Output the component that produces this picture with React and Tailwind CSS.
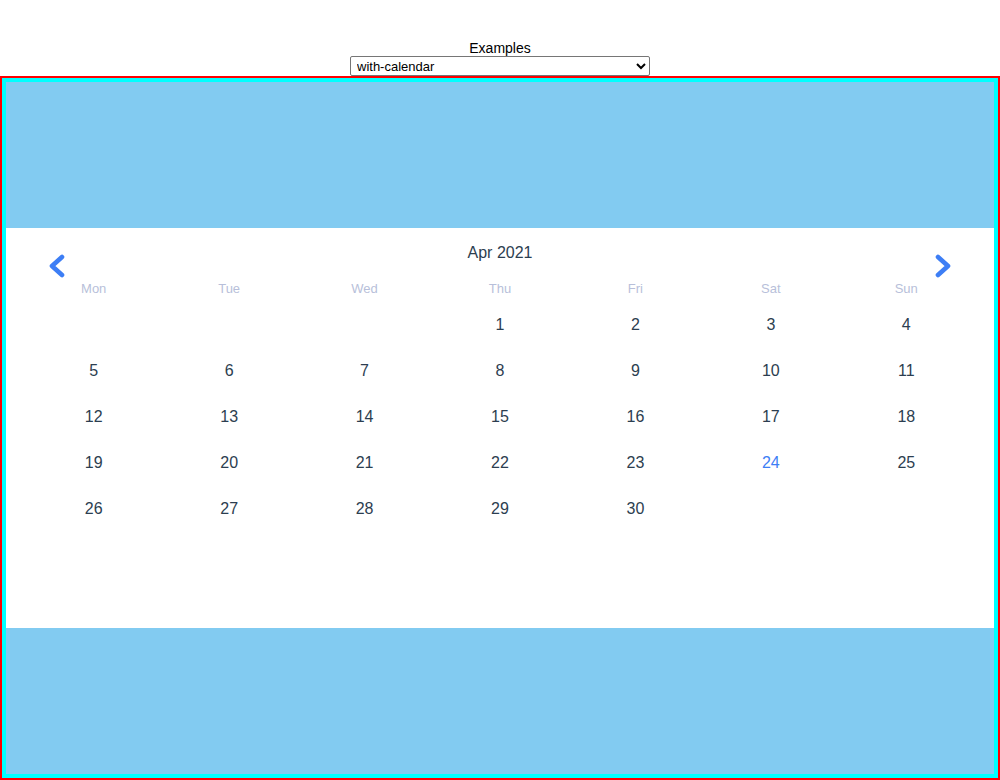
const weekdays = ["Mon", "Tue", "Wed", "Thu", "Fri", "Sat", "Sun"];

// April 2021 starts on a Thursday
const days = [
    null, null, null, 1, 2, 3, 4,
    5, 6, 7, 8, 9, 10, 11,
    12, 13, 14, 15, 16, 17, 18,
    19, 20, 21, 22, 23, 24, 25,
    26, 27, 28, 29, 30, null, null,
];

const Chevron = ({ dir }) => (
    <svg width="18" height="24" viewBox="0 0 18 24" fill="none">
        <path
            d={dir === "left" ? "M14 3 L4 12 L14 21" : "M4 3 L14 12 L4 21"}
            stroke="#3d7ef5"
            strokeWidth="4.6"
            strokeLinecap="round"
            strokeLinejoin="round"
        />
    </svg>
);

const Calendar = () => {
    return (
        <div className="relative h-[400px] bg-white px-5 pt-[15px]">
            {/* Month title */}
            <div className="text-center text-[16px] leading-[20px] text-[#2c3e50]">Apr 2021</div>

            {/* Nav arrows */}
            <button className="absolute left-[42px] top-[26px] cursor-pointer">
                <Chevron dir="left" />
            </button>
            <button className="absolute right-[42px] top-[26px] cursor-pointer">
                <Chevron dir="right" />
            </button>

            {/* Weekdays */}
            <div className="grid grid-cols-7 mt-[18px]">
                {weekdays.map((d) => (
                    <div key={d} className="text-center text-[13px] leading-4 text-[#b8bfda]">
                        {d}
                    </div>
                ))}
            </div>

            {/* Days */}
            <div className="grid grid-cols-7 mt-[5px]">
                {days.map((d, i) => (
                    <div
                        key={i}
                        className={`h-[46px] flex items-center justify-center text-[16px] ${
                            d === 24 ? "text-[#3d7ef5]" : "text-[#2c3e50]"
                        }`}
                    >
                        {d}
                    </div>
                ))}
            </div>
        </div>
    );
};

export default function App() {
    return (
        <div className="w-[1000px] h-[780px] bg-white pt-[40px] font-['Liberation_Sans',Arial,sans-serif] text-black">
            <div className="text-center text-[14px] leading-4">Examples</div>
            <div className="flex justify-center">
                <select
                    defaultValue="with-calendar"
                    className="w-[300px] h-[20px] border border-[#767676] rounded-[2px] bg-white text-[13px] pl-[2px]"
                >
                    <option value="with-calendar">with-calendar</option>
                    <option value="basic">basic</option>
                </select>
            </div>

            <div className="h-[704px] border-2 border-[#ff0000]">
                <div className="h-full border-4 border-[#00ffff] bg-[#82cbf1] flex flex-col justify-center">
                    <Calendar />
                </div>
            </div>
        </div>
    );
}
